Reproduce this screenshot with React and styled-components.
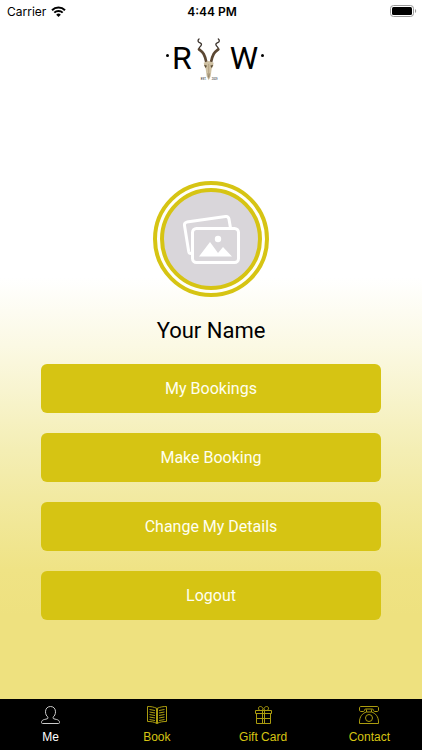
import React, { useState } from 'react';
import styled, { createGlobalStyle } from 'styled-components';

const gold = '#d6c413';

const GlobalStyle = createGlobalStyle`
  * {
    box-sizing: border-box;
  }
  body {
    margin: 0;
    font-family: Roboto, 'Liberation Sans', sans-serif;
    color: #000;
  }
`;

const Screen = styled.div`
  min-height: 100vh;
  display: flex;
  flex-direction: column;
  background: linear-gradient(#fff 37%, #fbf9e4 46%, #f4eeb4 60%, #efe385 76%, #eee17f 82%);
`;

const StatusBar = styled.header`
  display: grid;
  grid-template-columns: 1fr auto 1fr;
  align-items: center;
  height: 22px;
  padding: 0 5px 0 7px;
  font-family: Inter, sans-serif;
  font-size: 12px;
`;

const Carrier = styled.div`
  display: flex;
  align-items: center;
  gap: 5px;
`;

const Time = styled.span`
  font-weight: 600;
`;

const Battery = styled.svg`
  justify-self: end;
`;

const Logo = styled.div`
  display: flex;
  justify-content: center;
  align-items: center;
  height: 60px;
  margin-top: 6px;
  padding-left: 8px;
`;

const LogoLetter = styled.span`
  font-size: 32px;
  line-height: 56px;
`;

const LogoDot = styled.span`
  width: 3px;
  height: 3px;
  margin: 0 3px 6px;
  border-radius: 50%;
  background: #000;
`;

const Skull = styled.svg`
  margin: 4px 7px 0 3px;
`;

const Profile = styled.main`
  flex: 1;
  display: flex;
  flex-direction: column;
  align-items: center;
  padding: 93px 41px 20px;
`;

const Avatar = styled.button`
  display: flex;
  width: 116px;
  height: 116px;
  padding: 3px;
  border: 4px solid ${gold};
  border-radius: 50%;
  background: #fffffa;
`;

const AvatarImage = styled.span`
  flex: 1;
  align-self: stretch;
  display: flex;
  align-items: center;
  justify-content: center;
  border: 4px solid ${gold};
  border-radius: 50%;
  background: #d9d6da;
`;

const Name = styled.h1`
  margin: 20px 0;
  font-size: 22px;
  font-weight: 400;
  line-height: 27px;
`;

const Actions = styled.div`
  align-self: stretch;
  display: flex;
  flex-direction: column;
  gap: 20px;
`;

const ActionButton = styled.button`
  height: 49px;
  border: 0;
  border-radius: 6px;
  background: ${gold};
  color: #fffff0;
  font-family: inherit;
  font-size: 16px;
`;

const TabBar = styled.nav`
  display: grid;
  grid-template-columns: repeat(4, 1fr);
  gap: 5px;
  height: 51px;
  padding-right: 2px;
  background: #000;
`;

const Tab = styled.button`
  display: flex;
  flex-direction: column;
  align-items: center;
  gap: 3px;
  padding: 6px 0 0;
  border: 0;
  background: none;
  color: ${(props) => (props.$active ? '#fff' : gold)};
  font-family: 'Liberation Sans', Arial, sans-serif;
  font-size: 12px;
  line-height: 14px;
`;

const TabIcon = styled.svg`
  fill: none;
  stroke: currentColor;
  opacity: 0.8;
`;

const icons = {
  Me: (
    <path d="M10.500 1.500c3.200 0 5 2.300 5 5.300 0 2.300-1 4.400-2.500 5.500v.7c0 .8 1.600 1 3.300 1.400 2.100.5 3.200 1.300 3.200 3.100 0 .7-.4 1-1 1h-16c-.6 0-1-.3-1-1 0-1.800 1.100-2.600 3.200-3.100C6.400 14 8 13.800 8 13v-.7C6.500 11.200 5.500 9.100 5.500 6.800c0-3 1.800-5.300 5-5.300z" />
  ),
  Book: (
    <>
      <path d="M11 3.500C8 1.800 4.500 1.500 1.500 1.500v15c3.500 0 6.500.3 9.500 2 3-1.700 6-2 9.500-2v-15c-3 0-6.500.3-9.500 2zM10.500 3.500v15M11.500 3.500v15" />
      <path d="M3.500 4.500l5.500 1M3.500 7l5.500 1M3.500 9.500l5.500 1M3.500 12l5.500 1M3.500 14.500l5.500 1M18.500 4.500l-5.500 1M18.500 7l-5.500 1M18.500 9.500l-5.500 1M18.500 12l-5.500 1M18.500 14.500l-5.500 1" />
    </>
  ),
  'Gift Card': (
    <>
      <path d="M3.500 5.500h16v3h-16zM4.500 8.500h14v10h-14zM10.500 5.500v13M12.500 5.500v13M4.500 13.500h14" />
      <path d="M10.500 5.500l.5-2c-.6-1.300-1.500-2-2.500-2-1.500 0-2.300 1-2 2.300l1 1.700M12.500 5.500l-.5-2c.6-1.300 1.500-2 2.500-2 1.500 0 2.300 1 2 2.300l-1 1.700" />
    </>
  ),
  Contact: (
    <>
      <path d="M3 1.500h16c1 0 1.500.5 1.500 1.500v2c0 1-.5 1.500-1.500 1.500h-2c-1 0-1.500-.5-1.500-1.300 0-.8-.5-1.200-1.300-1.200H7.800c-.8 0-1.300.4-1.300 1.200 0 .8-.5 1.300-1.500 1.300H3c-1 0-1.500-.5-1.500-1.500V3c0-1 .5-1.500 1.500-1.500z" />
      <path d="M8.500 4.500V7c-4 1.200-7 4.500-7 10v1.500h19V17c0-5.500-3-8.800-7-10V4.500M8.500 7h5" />
      <circle cx="11" cy="13" r="3.500" />
    </>
  ),
};

const actions = ['My Bookings', 'Make Booking', 'Change My Details', 'Logout'];

function App() {
  const [currentTab, setCurrentTab] = useState('Me');

  return (
    <Screen>
      <GlobalStyle />
      <StatusBar>
        <Carrier>
          Carrier
          <svg width="15" height="11" viewBox="0 0 15 11" fill="none" stroke="#000" strokeWidth="2">
            <path d="M1 4.200a9.200 9.200 0 0 1 13 0M3.300 6.600a6 6 0 0 1 8.400 0" />
            <path d="M7.500 11L5.200 8.700a3.300 3.300 0 0 1 4.600 0z" fill="#000" stroke="none" />
          </svg>
        </Carrier>
        <Time>4:44 PM</Time>
        <Battery width="27" height="12" viewBox="0 0 27 12">
          <rect x="0.500" y="0.500" width="23" height="11" rx="3" fill="#fff" stroke="#999" />
          <rect x="2" y="2" width="20" height="8" rx="1.500" />
          <path d="M25 4c1.600.6 1.600 3.400 0 4z" fill="#999" />
        </Battery>
      </StatusBar>

      <Logo>
        <LogoDot />
        <LogoLetter>R</LogoLetter>
        <Skull width="28" height="44" viewBox="0 0 84 132">
          <g fill="none" strokeLinecap="round" strokeLinejoin="round">
            <path
              d="M12 3c-5 4-3 9 2 11s7 5 4 9-8 6-6 12M70 3c5 4 3 9-2 11s-7 5-4 9 8 6 6 12"
              stroke="#3c342e"
              strokeWidth="4"
            />
            <path
              d="M12 34c4 3 10 7 14 14s6 14 8 25M70 34c-4 3-10 7-14 14s-6 14-8 25"
              stroke="#5b4733"
              strokeWidth="8"
            />
          </g>
          <path d="M26 74l8-3 7-2 7 2 8 3-2 10-4 8-3 23-6 12-6-12-3-23-4-8z" fill="#cfc1a3" />
          <path d="M41 78v44" stroke="#a89675" strokeWidth="2" />
          <path d="M28 81l7 2-3 6zM54 81l-7 2 3 6zM38 106l2 12M44 106l-2 12" fill="#54452f" stroke="#54452f" />
          <text x="17" y="127" fontFamily="Liberation Sans, sans-serif" fontSize="8">EST.</text>
          <text x="50" y="127" fontFamily="Liberation Sans, sans-serif" fontSize="8">2019</text>
        </Skull>
        <LogoLetter>W</LogoLetter>
        <LogoDot />
      </Logo>

      <Profile>
        <Avatar aria-label="Change photo">
          <AvatarImage>
            <svg width="58" height="50" viewBox="0 0 58 50" fill="none" stroke="#fff" strokeWidth="3" strokeLinejoin="round">
              <path d="M9.500 39.500c-1.500.2-2.500-.4-2.800-2L2.500 11.500c-.3-2 .4-3 2.300-3.400L43.500 2.500c2-.3 3 .5 3.400 2.300L48.500 14" />
              <rect x="10.500" y="14.500" width="46" height="34" rx="4" />
              <circle cx="36" cy="25" r="3.200" fill="#fff" stroke="none" />
              <path d="M17 42.500L28 28l8 11 5-6 9 9.500z" fill="#fff" stroke="none" />
            </svg>
          </AvatarImage>
        </Avatar>
        <Name>Your Name</Name>
        <Actions>
          {actions.map((action) => (
            <ActionButton key={action}>{action}</ActionButton>
          ))}
        </Actions>
      </Profile>

      <TabBar>
        {Object.keys(icons).map((tab) => (
          <Tab key={tab} $active={tab === currentTab} onClick={() => setCurrentTab(tab)}>
            <TabIcon width="22" height="22" viewBox="0 0 22 22">
              {icons[tab]}
            </TabIcon>
            {tab}
          </Tab>
        ))}
      </TabBar>
    </Screen>
  );
}

export default App;
